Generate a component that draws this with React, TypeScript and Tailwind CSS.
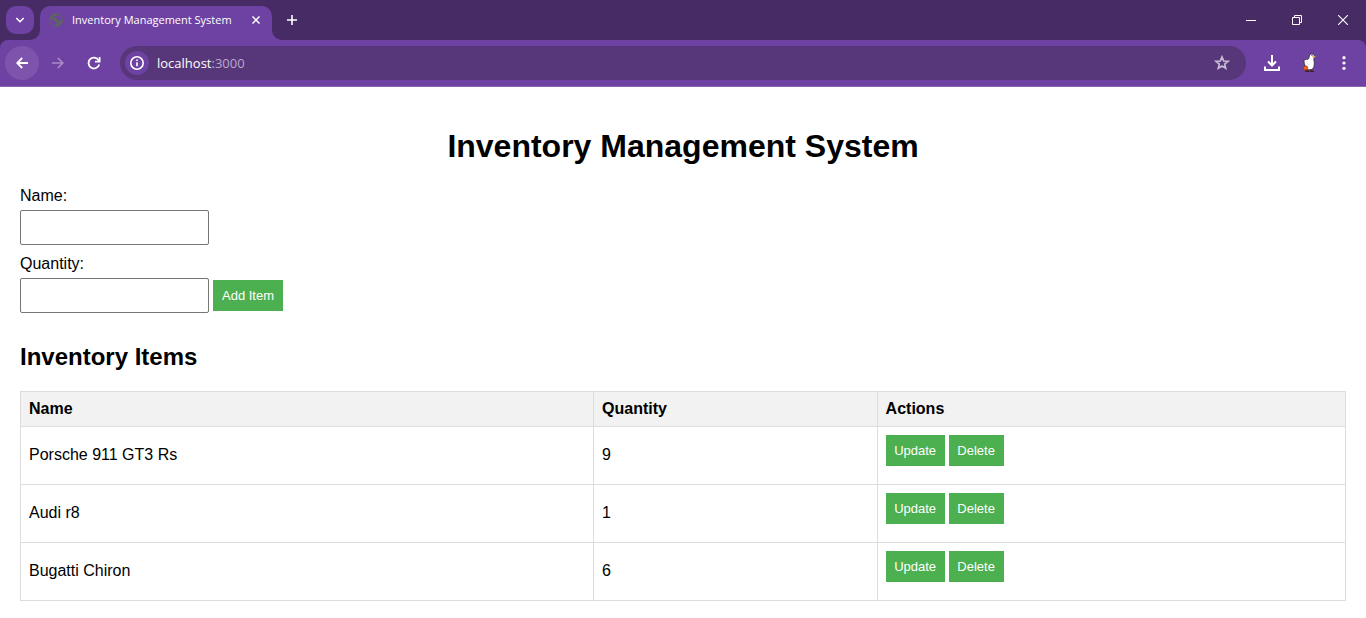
import { useState } from "react";

type Item = { name: string; quantity: number };

const initialItems: Item[] = [
  { name: "Porsche 911 GT3 Rs", quantity: 9 },
  { name: "Audi r8", quantity: 1 },
  { name: "Bugatti Chiron", quantity: 6 },
];

function TabStrip() {
  return (
    <div className="flex h-10 items-end bg-[#472b65] text-white">
      <button
        type="button"
        aria-label="Search tabs"
        className="mb-1.5 ml-1.5 flex h-7 w-7 items-center justify-center rounded-[10px] bg-[#6e42a2]"
      >
        <svg width="10" height="8" viewBox="0 0 10 8" fill="none" stroke="currentColor" strokeWidth="1.6">
          <path d="M1.3 2 5 5.700 8.700 2" />
        </svg>
      </button>
      <svg className="-ml-1 h-2.5 w-2.5 shrink-0" viewBox="0 0 10 10" aria-hidden="true">
        <path d="M10 0v10H0A10 10 0 0 0 10 0Z" fill="#6e42a2" />
      </svg>
      <div className="flex h-[34px] w-58 items-center rounded-t-[10px] bg-[#6e42a2] pb-1.5 pl-2">
        <svg width="16" height="16" viewBox="0 0 16 16" aria-hidden="true">
          <circle cx="8" cy="8" r="7" fill="#5f6368" />
          <path
            d="M9.500 2.300c.2 1-.4 1.600-1.400 1.700-.9.1-.9.900-1.600 1.100-.7.200-.9.600-.4 1 .7.500 2.600-.1 3.100.8.400.8.300 1.700 1.300 1.700 1.100 0 1.700-.7 3.300-.5A5.900 5.900 0 0 0 9.500 2.300ZM2.100 7.600a5.900 5.900 0 0 0 5 6.200c.1-.9.200-1.500 1-1.800.8-.3.900-1.300.3-1.900-.7-.7-1.700-.3-2.400-1-.7-.7-1.500-1.500-3.900-1.500Z"
            fill="#6e42a2"
          />
        </svg>
        <span className="ml-2 flex-1 truncate font-['Open_Sans','Noto_Sans',sans-serif] text-[11px] leading-4">
          Inventory Management System
        </span>
        <button type="button" aria-label="Close tab" className="mr-2 flex h-4 w-4 items-center justify-center">
          <svg width="8" height="8" viewBox="0 0 8 8" stroke="currentColor" strokeWidth="1.500">
            <path d="m.5.5 7 7M7.500.5l-7 7" />
          </svg>
        </button>
      </div>
      <svg className="h-2.5 w-2.5 shrink-0" viewBox="0 0 10 10" aria-hidden="true">
        <path d="M0 0v10h10A10 10 0 0 1 0 0Z" fill="#6e42a2" />
      </svg>
      <button type="button" aria-label="New tab" className="mb-1.5 flex h-7 w-5 items-center justify-center">
        <svg width="10" height="10" viewBox="0 0 10 10" stroke="currentColor" strokeWidth="1.600">
          <path d="M5 0v10M0 5h10" />
        </svg>
      </button>
      <div className="ml-auto flex h-10">
        <button type="button" aria-label="Minimize" className="flex w-[46px] items-center justify-center">
          <svg width="10" height="10" viewBox="0 0 10 10" stroke="currentColor">
            <path d="M0 5.500h10" />
          </svg>
        </button>
        <button type="button" aria-label="Restore" className="flex w-[46px] items-center justify-center">
          <svg width="10" height="10" viewBox="0 0 10 10" fill="none" stroke="currentColor">
            <path d="M.5 2.500h7v7h-7zM2.500 2.500v-2h7v7h-2" />
          </svg>
        </button>
        <button type="button" aria-label="Close" className="flex w-[46px] items-center justify-center">
          <svg width="10" height="10" viewBox="0 0 10 10" stroke="currentColor" strokeWidth="1.100">
            <path d="m0 0 10 10M10 0 0 10" />
          </svg>
        </button>
      </div>
    </div>
  );
}

function Toolbar() {
  return (
    <div className="bg-[#472b65]">
      <div className="flex h-[47px] items-center rounded-t-lg border-b border-[#8a66b3] bg-[#6e42a2] pl-[5px] text-white">
        <button
          type="button"
          aria-label="Back"
          className="flex h-[34px] w-[34px] items-center justify-center rounded-full bg-[#7c54ab]"
        >
          <svg width="12" height="12" viewBox="0 0 12 12" fill="none" stroke="currentColor" strokeWidth="1.800">
            <path d="M12 6H1.300M6.200 1 1.200 6l5 5" />
          </svg>
        </button>
        <button
          type="button"
          aria-label="Forward"
          className="ml-0.5 flex h-[34px] w-[34px] items-center justify-center text-[#a98bc9]"
        >
          <svg width="12" height="12" viewBox="0 0 12 12" fill="none" stroke="currentColor" strokeWidth="1.700">
            <path d="M0 6h10.700M5.800 1l5 5-5 5" />
          </svg>
        </button>
        <button
          type="button"
          aria-label="Reload"
          className="ml-0.5 flex h-[34px] w-[34px] items-center justify-center"
        >
          <svg width="14" height="14" viewBox="0 0 14 14" fill="none" stroke="currentColor" strokeWidth="1.800">
            <path d="M12.200 8.400A5.400 5.400 0 1 1 11.600 4.200L12.400 5.200" />
            <path d="M12.600 1v4.600H8" />
          </svg>
        </button>
        <div className="ml-[9px] flex h-[34px] flex-1 items-center rounded-full bg-[#573779] pr-4 pl-[5px]">
          <button
            type="button"
            aria-label="View site information"
            className="flex h-6 w-6 items-center justify-center rounded-full bg-[#6e42a2]"
          >
            <svg width="14" height="14" viewBox="0 0 14 14" fill="none" stroke="currentColor" strokeWidth="1.600">
              <circle cx="7" cy="7" r="6.200" />
              <path d="M7 6.200v4M7 3.600v1.500" />
            </svg>
          </button>
          <span className="ml-2 flex-1 font-['Open_Sans','Noto_Sans',sans-serif] text-[13px]">
            localhost<span className="text-[#bba8cd]">:3000</span>
          </span>
          <button type="button" aria-label="Bookmark this tab" className="text-[#c9bdd5]">
            <svg width="16" height="16" viewBox="0 0 16 16" fill="none" stroke="currentColor" strokeWidth="1.700">
              <path d="m8 2 1.700 4 4.300.3-3.300 2.800 1 4.200L8 11.100l-3.700 2.200 1-4.200L2 6.300 6.300 6Z" />
            </svg>
          </button>
        </div>
        <button type="button" aria-label="Downloads" className="ml-[17px] flex w-[18px] justify-center">
          <svg width="16" height="16" viewBox="0 0 16 16" fill="none" stroke="currentColor" strokeWidth="2">
            <path d="M8 0v10M4 6.500l4 4 4-4M1 11.500V15h14v-3.500" />
          </svg>
        </button>
        <button type="button" aria-label="Profile" className="ml-[19px] flex w-[18px] justify-center">
          <svg width="16" height="20" viewBox="0 0 16 20" aria-hidden="true">
            <path d="M5 16.500v1.700h3.500M10 16v2.200h3" fill="none" stroke="#43201c" strokeWidth="1.500" />
            <path
              d="M8.300 3.200C8.300 1.500 9.500.8 11 .9c1.600.1 2.500 1.200 2.400 2.700-.1 1.200-.6 1.800-.5 3.200.5 1.900.6 4.300.2 6.300-.5 2.400-1.800 3.600-4.200 3.700-2.300.1-3.900-.9-4.500-2.900C3.700 12 2.600 8.900 3.200 6.600c1 .2 1.700.2 2.500-.3.800.4 2.300.1 2.600-3.100Z"
              fill="#fff"
              stroke="#292231"
              strokeWidth=".8"
            />
            <path d="m11.300 2.800 3.200.5-.5 1.200-2.500-.3Z" fill="#e0b452" />
            <circle cx="11" cy="2.500" r=".6" fill="#201b24" />
            <path d="M5.500 9c.5 2 1.800 2.800 3.300 2.300" fill="none" stroke="#d2cfd6" strokeWidth=".7" />
            <rect x="2.500" y="13" width="4.200" height="4" rx="1.500" fill="#ef6419" stroke="#8b2d16" strokeWidth=".7" />
          </svg>
        </button>
        <button type="button" aria-label="Menu" className="mr-[13px] ml-[17px] flex w-[18px] justify-center">
          <svg width="4" height="14" viewBox="0 0 4 14" fill="currentColor">
            <circle cx="2" cy="1.700" r="1.600" />
            <circle cx="2" cy="7" r="1.600" />
            <circle cx="2" cy="12.300" r="1.600" />
          </svg>
        </button>
      </div>
    </div>
  );
}

const actionButton = "h-[31px] cursor-pointer bg-[#4caf50] text-center text-[13px] leading-4 text-white";
const textField =
  "block h-[35px] w-[189px] rounded-[2px] border border-[#767676] bg-white px-2 text-[13px] outline-none";
const cell = "border border-[#dddddd] p-2 text-left";
const textCell = "border border-[#dddddd] px-2 pb-0.5 text-left";

export default function App() {
  const [items, setItems] = useState<Item[]>(initialItems);
  const [name, setName] = useState("");
  const [quantity, setQuantity] = useState("");

  const addItem = () => {
    if (!name || !quantity) return;
    setItems([...items, { name, quantity: Number(quantity) }]);
    setName("");
    setQuantity("");
  };

  const updateItem = (index: number) => {
    setItems(
      items.map((item, i) =>
        i === index ? { name: name || item.name, quantity: quantity ? Number(quantity) : item.quantity } : item,
      ),
    );
  };

  return (
    <div className="min-h-screen bg-white font-['Liberation_Sans',Arial,sans-serif] text-base leading-[18px] text-black">
      <header>
        <TabStrip />
        <Toolbar />
      </header>
      <main className="px-5 pt-[41px] pb-4">
        <h1 className="text-center text-[32px] leading-9 font-bold">Inventory Management System</h1>
        <form
          className="mt-[23px]"
          onSubmit={(e) => {
            e.preventDefault();
            addItem();
          }}
        >
          <label htmlFor="item-name" className="mb-[5px] block">
            Name:
          </label>
          <input
            id="item-name"
            type="text"
            className={textField}
            value={name}
            onChange={(e) => setName(e.target.value)}
          />
          <label htmlFor="item-quantity" className="mt-2.5 mb-[5px] block">
            Quantity:
          </label>
          <div className="flex items-center gap-1">
            <input
              id="item-quantity"
              type="text"
              inputMode="numeric"
              className={textField}
              value={quantity}
              onChange={(e) => setQuantity(e.target.value)}
            />
            <button type="submit" className={`${actionButton} w-[70px]`}>
              Add Item
            </button>
          </div>
        </form>
        <h2 className="mt-[30px] text-2xl leading-7 font-bold">Inventory Items</h2>
        <table className="mt-5 w-full table-fixed border-collapse">
          <colgroup>
            <col className="w-[43.25%]" />
            <col className="w-[21.4%]" />
            <col />
          </colgroup>
          <thead>
            <tr className="bg-[#f2f2f2]">
              <th scope="col" className={cell}>Name</th>
              <th scope="col" className={cell}>Quantity</th>
              <th scope="col" className={cell}>Actions</th>
            </tr>
          </thead>
          <tbody>
            {items.map((item, index) => (
              <tr key={index}>
                <td className={textCell}>{item.name}</td>
                <td className={textCell}>{item.quantity}</td>
                <td className={cell}>
                  <div className="mb-2.5 flex gap-1">
                    <button type="button" className={`${actionButton} w-[59px]`} onClick={() => updateItem(index)}>
                      Update
                    </button>
                    <button
                      type="button"
                      className={`${actionButton} w-[55px]`}
                      onClick={() => setItems(items.filter((_, i) => i !== index))}
                    >
                      Delete
                    </button>
                  </div>
                </td>
              </tr>
            ))}
          </tbody>
        </table>
      </main>
    </div>
  );
}
